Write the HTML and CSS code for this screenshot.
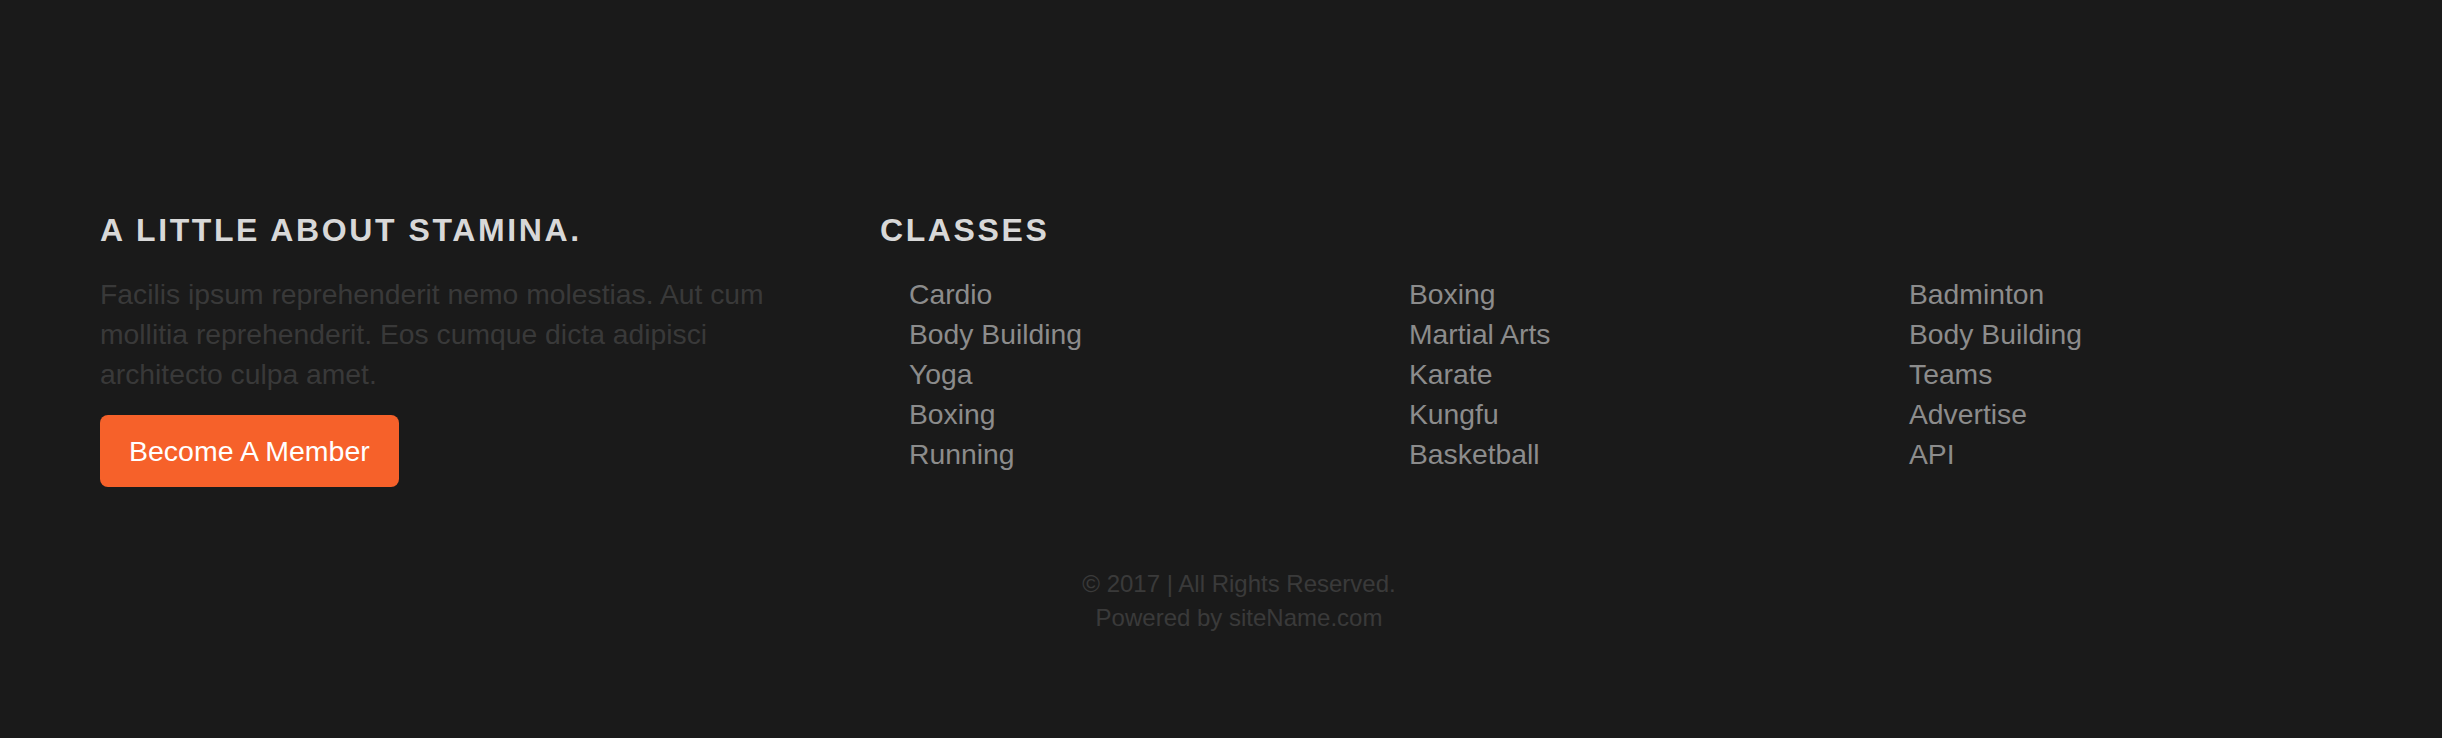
FILE: index.html
```html
<!DOCTYPE html>
<html lang="en">
<head>
<meta charset="utf-8">
<title>Stamina Footer</title>
<link rel="stylesheet" href="styles.css">
</head>
<body>
<footer class="site-footer">
  <div class="footer-main">
    <div class="about">
      <h3 class="footer-heading">A Little About Stamina.</h3>
      <p class="about-text">Facilis ipsum reprehenderit nemo molestias. Aut cum mollitia reprehenderit. Eos cumque dicta adipisci architecto culpa amet.</p>
      <a class="btn-member" href="#">Become A Member</a>
    </div>
    <div class="classes">
      <h3 class="footer-heading">Classes</h3>
      <div class="class-lists">
        <ul class="class-list">
          <li>Cardio</li>
          <li>Body Building</li>
          <li>Yoga</li>
          <li>Boxing</li>
          <li>Running</li>
        </ul>
        <ul class="class-list">
          <li>Boxing</li>
          <li>Martial Arts</li>
          <li>Karate</li>
          <li>Kungfu</li>
          <li>Basketball</li>
        </ul>
        <ul class="class-list">
          <li>Badminton</li>
          <li>Body Building</li>
          <li>Teams</li>
          <li>Advertise</li>
          <li>API</li>
        </ul>
      </div>
    </div>
  </div>
  <div class="copyright">
    <p>© 2017 | All Rights Reserved.</p>
    <p>Powered by siteName.com</p>
  </div>
</footer>
</body>
</html>
```
FILE: styles.css
```css
html, body {
  margin: 0;
  padding: 0;
}
body {
  background: #1a1a1a;
  font-family: "Liberation Sans", Arial, Helvetica, sans-serif;
  height: 738px;
  overflow: hidden;
}
.site-footer {
  padding: 212px 100px 0 100px;
}
.footer-main {
  display: grid;
  grid-template-columns: 780px 1fr;
}
.footer-heading {
  margin: 0 0 26px 0;
  font-size: 32px;
  line-height: 36px;
  font-weight: 700;
  text-transform: uppercase;
  letter-spacing: 2.6px;
  color: #d8d8d8;
}
.about-text {
  margin: 0 0 21px 0;
  width: 690px;
  font-size: 28.3px;
  line-height: 40px;
  color: #393939;
}
.btn-member {
  display: inline-block;
  padding: 16px 29px;
  font-size: 28.5px;
  line-height: 40px;
  color: #ffffff;
  background: #f6612a;
  border-radius: 8px;
  text-decoration: none;
}
.class-lists {
  display: grid;
  grid-template-columns: 500px 500px 1fr;
  padding-left: 29px;
}
.class-list {
  margin: 0;
  padding: 0;
  list-style: none;
}
.class-list li {
  font-size: 28.3px;
  line-height: 40px;
  color: #8c8c8c;
}
.copyright {
  margin-top: 80px;
  padding-left: 36px;
  text-align: center;
}
.copyright p {
  margin: 0;
  font-size: 24px;
  line-height: 34px;
  color: #3a3a3a;
}
```
